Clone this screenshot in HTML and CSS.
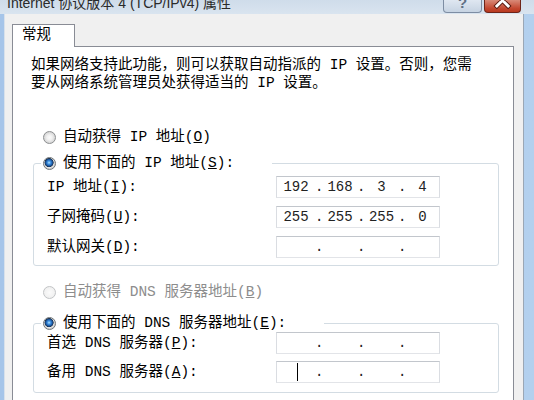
FILE: index.html
```html
<!DOCTYPE html>
<html lang="zh-CN">
<head>
<meta charset="utf-8">
<title>Internet 协议版本 4 (TCP/IPv4) 属性</title>
<link rel="stylesheet" href="styles.css">
</head>
<body>
<div class="window">
  <header class="titlebar">
    <span class="title">Internet 协议版本 4 (TCP/IPv4) 属性</span>
    <div class="caption-buttons">
      <span class="cap-btn help">?</span>
      <span class="cap-btn close">
        <svg width="37" height="13" viewBox="0 0 37 13" aria-hidden="true">
          <path d="M12.5 -6 L24.5 6 M24.5 -6 L12.5 6" stroke="#5a1a10" stroke-width="5" stroke-linecap="square"/>
          <path d="M12.5 -6 L24.5 6 M24.5 -6 L12.5 6" stroke="#ffffff" stroke-width="3" stroke-linecap="square"/>
        </svg>
      </span>
    </div>
  </header>

  <div class="frame">
    <div class="client">
      <div class="tabs">
        <span class="tab active">常规</span>
      </div>

      <div class="panel">
        <p class="intro">如果网络支持此功能，则可以获取自动指派的 IP 设置。否则，您需要从网络系统管理员处获得适当的 IP 设置。</p>

        <label class="radio-row standalone">
          <input class="radio" type="radio" name="ip-mode">
          <span>自动获得 IP 地址(<u>O</u>)</span>
        </label>

        <fieldset class="group">
          <legend>
            <label class="radio-row">
              <input class="radio" type="radio" name="ip-mode" checked>
              <span>使用下面的 IP 地址(<u>S</u>):</span>
            </label>
          </legend>
          <div class="fields">
            <span class="field-label">IP 地址(<u>I</u>):</span>
            <div class="ip-box"><span>192</span><span>.</span><span>168</span><span>.</span><span>3</span><span>.</span><span>4</span></div>

            <span class="field-label">子网掩码(<u>U</u>):</span>
            <div class="ip-box"><span>255</span><span>.</span><span>255</span><span>.</span><span>255</span><span>.</span><span>0</span></div>

            <span class="field-label">默认网关(<u>D</u>):</span>
            <div class="ip-box"><span></span><span>.</span><span></span><span>.</span><span></span><span>.</span><span></span></div>
          </div>
        </fieldset>

        <label class="radio-row standalone disabled dns-auto">
          <input class="radio" type="radio" name="dns-mode" disabled>
          <span>自动获得 DNS 服务器地址(<u>B</u>)</span>
        </label>

        <fieldset class="group dns-group">
          <legend>
            <label class="radio-row">
              <input class="radio" type="radio" name="dns-mode" checked>
              <span>使用下面的 DNS 服务器地址(<u>E</u>):</span>
            </label>
          </legend>
          <div class="fields dns">
            <span class="field-label">首选 DNS 服务器(<u>P</u>):</span>
            <div class="ip-box"><span></span><span>.</span><span></span><span>.</span><span></span><span>.</span><span></span></div>

            <span class="field-label">备用 DNS 服务器(<u>A</u>):</span>
            <div class="ip-box"><span class="caret-cell"><i class="caret"></i></span><span>.</span><span></span><span>.</span><span></span><span>.</span><span></span></div>
          </div>
        </fieldset>
      </div>
    </div>
  </div>
</div>
</body>
</html>
```
FILE: styles.css
```css
html, body {
  margin: 0;
  padding: 0;
}

body {
  width: 534px;
  height: 400px;
  overflow: hidden;
  background: #a9c7ea;
  font-family: "Liberation Mono", "Noto Sans CJK SC", monospace;
  font-size: 14.5px;
  line-height: 18px;
  color: #000;
}

.window {
  display: flex;
  flex-direction: column;
  height: 400px;
}

/* ---- title bar ---- */
.titlebar {
  flex: none;
  height: 14px;
  display: flex;
  align-items: flex-start;
  justify-content: space-between;
  overflow: hidden;
  background: linear-gradient(to bottom, #cfdcea, #d9e4ef);
}

.title {
  margin: -7px 0 0 7px;
  font-family: "Liberation Sans", "Noto Sans CJK SC", sans-serif;
  font-size: 14px;
  line-height: 20px;
  color: #2a2a2a;
  white-space: nowrap;
}

.caption-buttons {
  display: flex;
  gap: 2px;
  margin-right: 13px;
}

.cap-btn {
  box-sizing: border-box;
  height: 13px;
  border: 1px solid;
  border-top: none;
  border-radius: 0 0 4px 4px;
  display: flex;
  justify-content: center;
  align-items: flex-end;
  overflow: hidden;
}

.help {
  width: 39px;
  border-color: #7d8da3;
  background: linear-gradient(to bottom, #dfe7f1, #c6d3e2);
  color: #5f6f84;
  font-family: "Liberation Sans", sans-serif;
  font-weight: bold;
  font-size: 15px;
  line-height: 16px;
  padding-bottom: 1px;
}

.close {
  width: 37px;
  border-color: #6e2418;
  background: linear-gradient(to bottom, #d98a78, #c4472f 70%, #b8391f);
  align-items: stretch;
}

.close svg {
  display: block;
}

/* ---- dialog body ---- */
.frame {
  flex: 1;
  display: flex;
  padding: 0 10px 0 4px;
  background: linear-gradient(to right, #a6c5e9, #b3d0ee);
  min-height: 0;
}

.client {
  flex: 1;
  display: flex;
  flex-direction: column;
  padding: 10px 9px 0 7px;
  background: #f0f0f0;
  border-left: 1px solid #d8e1eb;
  border-right: 1px solid #9ba7b5;
}

.tabs {
  display: flex;
}

.tab {
  box-sizing: border-box;
  width: 63px;
  padding: 0 0 2px 9px;
  line-height: 20px;
  border: 1px solid #898c95;
  border-bottom: none;
  background: #fff;
  margin-bottom: -1px;
  position: relative;
  z-index: 1;
}

.panel {
  flex: 1;
  background: #fff;
  border: 1px solid #898c95;
  border-bottom: none;
}

.intro {
  margin: 9px 0 0 18px;
  width: 448px;
}

/* ---- radio buttons ---- */
.radio-row {
  display: flex;
  align-items: center;
  gap: 7px;
  height: 18px;
  white-space: nowrap;
}

.radio-row.standalone {
  margin: 36px 0 0 30px;
}

.radio-row.dns-auto {
  margin-top: 17px;
}

.radio {
  appearance: none;
  -webkit-appearance: none;
  box-sizing: border-box;
  flex: none;
  margin: 0;
  width: 13px;
  height: 13px;
  border-radius: 50%;
  border: 1px solid #8c8e90;
  background: radial-gradient(circle at 50% 50%, #fafafa 0, #f1f1f1 2.5px, #d6d6d6 5.5px);
}

.radio:checked {
  border-color: #6f7478;
  background: radial-gradient(circle at 46% 42%, #b9e6ff 0, #4b9de8 1.4px, #2366b4 2.8px, #153f75 3.9px, #233040 4.3px, #c9ccce 4.7px, #ececec 5px, #d4d4d4 5.5px);
}

.radio:disabled {
  border-color: #c2c4c6;
  background: radial-gradient(circle at 50% 50%, #fbfbfb 0, #f0f0f0 5.5px);
}

.disabled {
  color: #8d8d8d;
}

u {
  text-decoration: underline;
  text-underline-offset: 1px;
}

/* ---- group boxes ---- */
.group {
  box-sizing: border-box;
  width: 466px;
  min-width: 0;
  margin: 8px 0 0 20px;
  padding: 0;
  border: 1px solid #d3dce3;
  border-radius: 3px;
}

.group.dns-group {
  margin-top: 13px;
}

.group legend {
  margin-left: 7px;
  padding: 0 38px 0 2px;
}

.fields {
  display: grid;
  grid-template-columns: 229px 164px;
  row-gap: 8px;
  align-items: center;
  padding: 4px 0 7px 13px;
}

.fields.dns {
  row-gap: 7px;
  padding: 0 0 9px 13px;
}

.field-label {
  white-space: nowrap;
}

/* ---- IP address control ---- */
.ip-box {
  box-sizing: border-box;
  height: 22px;
  border: 1px solid;
  border-color: #c2c6cc #dadde2 #e2e4e8 #dadde2;
  background: #fff;
  display: grid;
  grid-template-columns: 38px 8px 34px 8px 33px 8px 1fr;
  align-items: center;
  font-family: "Liberation Mono", monospace;
  font-size: 14px;
  line-height: 20px;
  color: #222;
}

.ip-box span {
  text-align: center;
  white-space: nowrap;
}

.caret-cell {
  display: flex;
  justify-content: center;
  align-items: center;
  height: 20px;
}

.caret {
  display: block;
  width: 1px;
  height: 18px;
  background: #000;
  margin-left: 3px;
}
```
